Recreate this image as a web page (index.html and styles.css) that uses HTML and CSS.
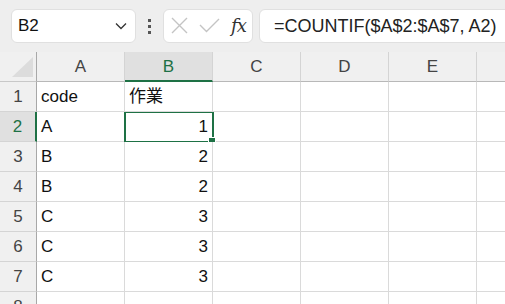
FILE: index.html
```html
<!DOCTYPE HTML>
<html>

<head>
  <meta charset="UTF-8">
  <title>Sheet1</title>
  <link rel="stylesheet" href="styles.css">
</head>

<body>
  <div class="bar">
    <div class="namebox">
      <span class="ref">B2</span>
      <svg class="chev" width="12" height="8" viewBox="0 0 12 8">
        <path d="M1 1.5 L6 6.5 L11 1.5" fill="none" stroke="#333" stroke-width="1.3" />
      </svg>
    </div>
    <div class="dots"><i></i><i></i><i></i></div>
    <div class="fxbox">
      <svg width="17" height="17" viewBox="0 0 17 17">
        <path d="M1 1 L16 16 M16 1 L1 16" stroke="#c4c4c4" stroke-width="1.4" />
      </svg>
      <svg width="21" height="15" viewBox="0 0 21 15">
        <path d="M1 7 L7.5 13.5 L20 1" fill="none" stroke="#c4c4c4" stroke-width="1.4" />
      </svg>
      <span class="fx">fx</span>
    </div>
    <div class="formula">=COUNTIF($A$2:$A$7, A2)</div>
  </div>

  <div class="sheet">
    <div class="row head">
      <div class="rh corner"><span class="tri"></span></div>
      <div class="ch">A</div>
      <div class="ch on">B</div>
      <div class="ch">C</div>
      <div class="ch">D</div>
      <div class="ch">E</div>
      <div class="ch"></div>
    </div>
    <div class="row">
      <div class="rh">1</div>
      <div class="c">code</div>
      <div class="c">作業</div>
      <div class="c"></div><div class="c"></div><div class="c"></div><div class="c"></div>
    </div>
    <div class="row">
      <div class="rh on">2</div>
      <div class="c">A</div>
      <div class="c num sel">1<span class="handle"></span></div>
      <div class="c"></div><div class="c"></div><div class="c"></div><div class="c"></div>
    </div>
    <div class="row">
      <div class="rh">3</div>
      <div class="c">B</div>
      <div class="c num">2</div>
      <div class="c"></div><div class="c"></div><div class="c"></div><div class="c"></div>
    </div>
    <div class="row">
      <div class="rh">4</div>
      <div class="c">B</div>
      <div class="c num">2</div>
      <div class="c"></div><div class="c"></div><div class="c"></div><div class="c"></div>
    </div>
    <div class="row">
      <div class="rh">5</div>
      <div class="c">C</div>
      <div class="c num">3</div>
      <div class="c"></div><div class="c"></div><div class="c"></div><div class="c"></div>
    </div>
    <div class="row">
      <div class="rh">6</div>
      <div class="c">C</div>
      <div class="c num">3</div>
      <div class="c"></div><div class="c"></div><div class="c"></div><div class="c"></div>
    </div>
    <div class="row">
      <div class="rh">7</div>
      <div class="c">C</div>
      <div class="c num">3</div>
      <div class="c"></div><div class="c"></div><div class="c"></div><div class="c"></div>
    </div>
    <div class="row last">
      <div class="rh">8</div>
      <div class="c"></div><div class="c"></div>
      <div class="c"></div><div class="c"></div><div class="c"></div><div class="c"></div>
    </div>
  </div>
</body>

</html>
```

FILE: styles.css
```css
body {
  margin: 0;
  width: 505px;
  height: 304px;
  overflow: hidden;
  background: #fff;
  font-family: "Liberation Sans", "Noto Sans CJK JP", sans-serif;
  color: #222;
}

.bar {
  display: flex;
  align-items: center;
  height: 52px;
  padding-left: 11px;
  box-sizing: border-box;
  background: #eeeeee;
  white-space: nowrap;
  overflow: hidden;
}

.bar > * {
  flex-shrink: 0;
}

.namebox {
  display: flex;
  align-items: center;
  justify-content: space-between;
  width: 125px;
  height: 34px;
  box-sizing: border-box;
  padding: 0 8px 0 6px;
  background: #fff;
  border: 1px solid #e0e0e0;
  border-radius: 6px;
  margin-bottom: 1px;
}

.ref {
  font-size: 17px;
  color: #111;
}

.dots {
  display: flex;
  flex-direction: column;
  gap: 3px;
  margin: 0 12px;
}

.dots i {
  display: block;
  width: 3px;
  height: 3px;
  background: #555;
}

.fxbox {
  display: flex;
  align-items: center;
  width: 90px;
  height: 34px;
  box-sizing: border-box;
  padding: 0 5px 0 7px;
  gap: 11px;
  background: #fff;
  border: 1px solid #e0e0e0;
  border-radius: 6px;
  margin-bottom: 1px;
}

.fx {
  font-family: "DejaVu Serif", "Liberation Serif", serif;
  font-style: italic;
  font-size: 18px;
  color: #333;
  letter-spacing: -1px;
}

.formula {
  width: 300px;
  height: 34px;
  line-height: 32px;
  box-sizing: border-box;
  margin-left: 6px;
  padding-left: 14px;
  background: #fff;
  border: 1px solid #e0e0e0;
  border-radius: 6px;
  font-size: 18px;
  color: #222;
  margin-bottom: 1px;
}

.sheet {
  font-size: 17px;
}

.row {
  display: flex;
  height: 30px;
  overflow: hidden;
}

.row.last {
  height: 13px;
}

.rh,
.ch,
.c {
  box-sizing: border-box;
  height: 30px;
  flex-shrink: 0;
}

.rh {
  width: 37px;
  background: #f0f0f0;
  border-right: 1px solid #a8a8a8;
  border-bottom: 1px solid #d4d4d4;
  text-align: center;
  line-height: 30px;
  color: #444;
}

.rh.on {
  background: #e0e0e0;
  border-right: 2px solid #1e7145;
  color: #1e7145;
}

.corner {
  position: relative;
  border-bottom: 1px solid #c8c8c8;
}

.tri {
  position: absolute;
  left: 12px;
  top: 5px;
  width: 0;
  height: 0;
  border-left: 21px solid transparent;
  border-bottom: 20px solid #dcdcdc;
}

.ch {
  width: 88px;
  background: #f0f0f0;
  border-right: 1px solid #d4d4d4;
  border-bottom: 1px solid #b8b8b8;
  text-align: center;
  line-height: 30px;
  color: #444;
}

.ch.on {
  background: #e0e0e0;
  border-bottom: 2px solid #1e7145;
  color: #1e7145;
}

.c {
  position: relative;
  width: 88px;
  padding: 0 4px;
  border-right: 1px solid #dadada;
  border-bottom: 1px solid #dadada;
  line-height: 30px;
  color: #111;
}

.c.num {
  text-align: right;
}

.c.sel {
  outline: 2px solid #1e7145;
  outline-offset: -1px;
  z-index: 1;
}

.handle {
  position: absolute;
  right: -4px;
  bottom: -4px;
  width: 6px;
  height: 6px;
  background: #1e7145;
  border: 1px solid #fff;
}
```
